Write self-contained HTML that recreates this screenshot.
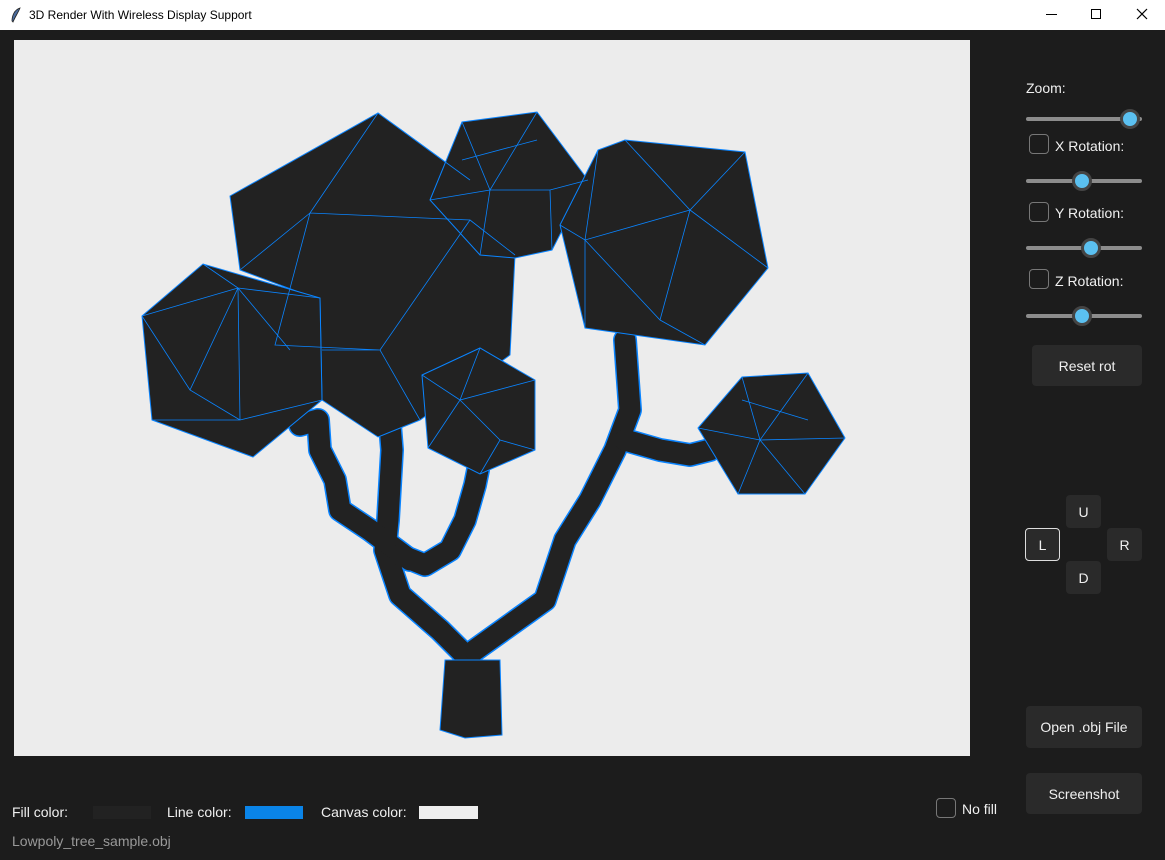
<!DOCTYPE html>
<html><head><meta charset="utf-8"><style>
*{margin:0;padding:0;box-sizing:border-box}
body{width:1165px;height:860px;background:#1c1c1c;font-family:"Liberation Sans",sans-serif;color:#f0f0f0;position:relative;overflow:hidden;font-size:14px}
.title{position:absolute;left:0;top:0;width:1165px;height:30px;background:#fff;color:#000;font-size:12px}
.abs{position:absolute}
.slider{position:absolute;left:1026px;width:116px;height:4px;background:#8c8c8c;border-radius:2px}
.knob{position:absolute;top:-8px;width:20px;height:20px;border-radius:50%;background:#5bc0f0;border:3px solid #444}
.cb{position:absolute;left:1029px;width:20px;height:20px;border:1px solid #777;border-radius:4px}
.btn{position:absolute;background:#2a2a2a;border-radius:4px;color:#f0f0f0;display:flex;align-items:center;justify-content:center;font-size:14px}
</style></head><body>
<div class="title">
<svg class="abs" style="left:10px;top:7px" width="12" height="16" viewBox="0 0 12 16"><path d="M10 1 C4 3 2 9 2 14 L3 15 C5 10 8 6 10 1Z" fill="#4a6a9a" stroke="#222" stroke-width="0.8"/></svg>
<span class="abs" style="left:29px;top:8px">3D Render With Wireless Display Support</span>
<span class="abs" style="left:1046px;top:14px;width:11px;height:1px;background:#000"></span>
<span class="abs" style="left:1091px;top:9px;width:10px;height:10px;border:1px solid #000"></span>
<svg class="abs" style="left:1136px;top:8px" width="12" height="12"><path d="M1 1L11 11M11 1L1 11" stroke="#000" stroke-width="1.2"/></svg>
</div>
<div class="abs" style="left:14px;top:40px;width:956px;height:716px;background:#ececec"></div>
<svg class="abs" style="left:0;top:0" width="1165" height="860">
<g fill="none" stroke-linejoin="round" stroke-linecap="round">
<g stroke="#0a84ff" stroke-width="24">
<polyline points="470,660 440,630 400,595 385,550 388,520 392,450 390,425"/>
<polyline points="410,560 370,530 340,510 335,480 320,450 318,420 300,425"/>
<polyline points="400,555 425,565 450,550 465,520 475,485 478,470"/>
<polyline points="475,650 510,625 545,600 565,540 590,500 615,450 630,410 625,340"/>
<polyline points="625,440 660,450 690,455 710,450"/>
</g>
<g stroke="#222" stroke-width="21">
<polyline points="470,660 440,630 400,595 385,550 388,520 392,450 390,425"/>
<polyline points="410,560 370,530 340,510 335,480 320,450 318,420 300,425"/>
<polyline points="400,555 425,565 450,550 465,520 475,485 478,470"/>
<polyline points="475,650 510,625 545,600 565,540 590,500 615,450 630,410 625,340"/>
<polyline points="625,440 660,450 690,455 710,450"/>
</g>
</g>
<g fill="#222" stroke="#0a84ff" stroke-width="1">
<polygon points="440,730 445,660 500,660 502,735 465,738"/>
<polygon points="230,196 378,113 470,180 515,255 510,355 420,420 378,437 322,400 320,300 240,270"/>
<polygon points="142,316 203,264 320,298 322,400 253,457 152,420"/>
<polygon points="430,200 462,122 537,112 588,180 552,250 515,258 480,255"/>
<polygon points="560,225 598,150 625,140 745,152 768,268 705,345 585,328"/>
<polygon points="422,375 480,348 535,380 535,450 480,474 428,448"/>
<polygon points="698,428 742,377 808,373 845,438 805,494 738,494"/>
</g>
<g stroke="#0a84ff" stroke-width="0.8" fill="none">
<path d="M310,213 L378,113 L470,180 M310,213 L470,220 M310,213 L275,345 L380,350 L470,220 L515,255 M380,350 L420,420 M322,350 L380,350 M310,213 L240,270"/>
<path d="M142,316 L238,288 L203,264 M238,288 L320,298 M238,288 L240,420 L152,420 M240,420 L322,400 M238,288 L190,390 L240,420 M190,390 L142,316 M238,288 L290,350"/>
<path d="M462,122 L490,190 L537,112 M490,190 L430,200 M490,190 L550,190 L588,180 M490,190 L480,255 M550,190 L552,250 M462,160 L537,140"/>
<path d="M625,140 L690,210 L745,152 M690,210 L585,240 L560,225 M690,210 L768,268 M585,240 L585,328 M585,240 L660,320 L705,345 M660,320 L690,210 M598,150 L585,240"/>
<path d="M480,348 L460,400 L535,380 M460,400 L428,448 M460,400 L500,440 L535,450 M500,440 L480,474 M422,375 L460,400"/>
<path d="M742,377 L760,440 L808,373 M760,440 L698,428 M760,440 L845,438 M760,440 L738,494 M760,440 L805,494 M742,400 L808,420"/>
</g>
</svg>
<span class="abs" style="left:1026px;top:80px">Zoom:</span>
<div class="slider" style="top:117px"><div class="knob" style="left:94px"></div></div>
<div class="cb" style="top:134px"></div><span class="abs" style="left:1055px;top:138px">X Rotation:</span>
<div class="slider" style="top:179px"><div class="knob" style="left:46px"></div></div>
<div class="cb" style="top:202px"></div><span class="abs" style="left:1055px;top:205px">Y Rotation:</span>
<div class="slider" style="top:246px"><div class="knob" style="left:55px"></div></div>
<div class="cb" style="top:269px"></div><span class="abs" style="left:1055px;top:273px">Z Rotation:</span>
<div class="slider" style="top:314px"><div class="knob" style="left:46px"></div></div>
<div class="btn" style="left:1032px;top:345px;width:110px;height:41px">Reset rot</div>
<div class="btn" style="left:1066px;top:495px;width:35px;height:33px">U</div>
<div class="btn" style="left:1025px;top:528px;width:35px;height:33px;border:1px solid #ddd">L</div>
<div class="btn" style="left:1107px;top:528px;width:35px;height:33px">R</div>
<div class="btn" style="left:1066px;top:561px;width:35px;height:33px">D</div>
<div class="btn" style="left:1026px;top:706px;width:116px;height:42px">Open .obj File</div>
<div class="btn" style="left:1026px;top:773px;width:116px;height:41px">Screenshot</div>
<div class="abs" style="left:936px;top:798px;width:20px;height:20px;border:1px solid #777;border-radius:4px"></div>
<span class="abs" style="left:962px;top:801px">No fill</span>
<span class="abs" style="left:12px;top:804px">Fill color:</span>
<div class="abs" style="left:93px;top:806px;width:58px;height:13px;background:#222"></div>
<span class="abs" style="left:167px;top:804px">Line color:</span>
<div class="abs" style="left:245px;top:806px;width:58px;height:13px;background:#0a84e8"></div>
<span class="abs" style="left:321px;top:804px">Canvas color:</span>
<div class="abs" style="left:419px;top:806px;width:59px;height:13px;background:#eee"></div>
<span class="abs" style="left:12px;top:833px;color:#999">Lowpoly_tree_sample.obj</span>
</body></html>
